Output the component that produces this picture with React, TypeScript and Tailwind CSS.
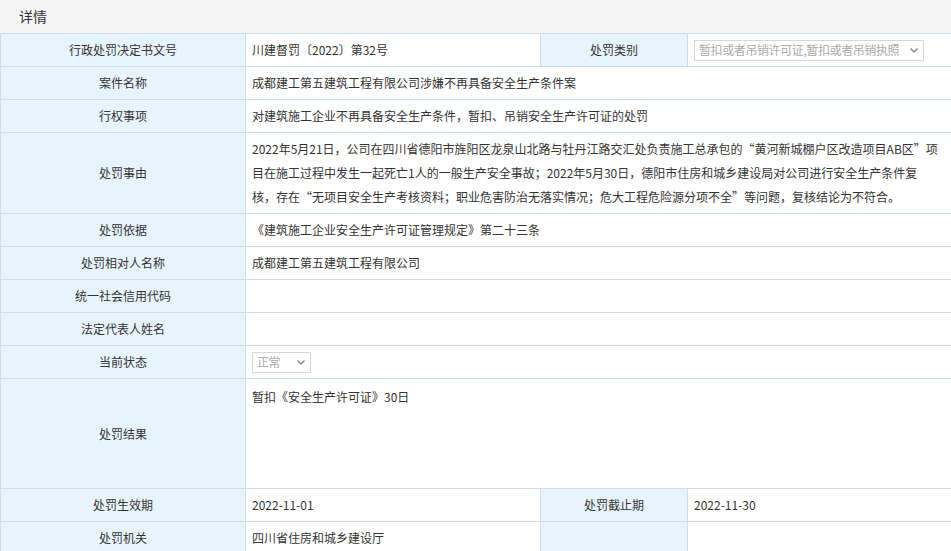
const L = "border border-[#cfdbe6] bg-[#e8f4fd] text-center align-middle";
const V = "border border-[#cfdbe6] bg-white px-[6px] align-middle";

function Sel({ text, w }: { text: string; w: string }) {
  return (
    <div className={`flex h-[21px] items-center justify-between border border-[#d6d6d6] bg-white pl-[4px] pr-[4px] text-[#aaa] ${w}`}>
      <span className="overflow-hidden whitespace-nowrap tracking-[-0.4px]">{text}</span>
      <svg width="10" height="10" viewBox="0 0 10 10" className="ml-1 shrink-0">
        <path d="M1.5 3.5 5 7 8.5 3.5" fill="none" stroke="#888" strokeWidth="1.5" />
      </svg>
    </div>
  );
}

export default function App() {
  return (
    <div className="h-[551px] w-[951px] overflow-hidden bg-white text-[12px] text-[#333]" style={{ fontFamily: '"Noto Sans CJK SC", "Liberation Sans", sans-serif' }}>
      <div className="flex h-[33px] items-center bg-[#f5f5f5] pl-[19px] text-[14px] text-[#333]">详情</div>
      <table className="w-[952px] table-fixed border-collapse">
        <colgroup>
          <col className="w-[245px]" />
          <col className="w-[295px]" />
          <col className="w-[147px]" />
          <col />
        </colgroup>
        <tbody>
          <tr className="h-[33px]">
            <td className={L}>行政处罚决定书文号</td>
            <td className={V}>川建督罚〔2022〕第32号</td>
            <td className={L}>处罚类别</td>
            <td className={V}><Sel text="暂扣或者吊销许可证,暂扣或者吊销执照" w="w-[230px]" /></td>
          </tr>
          <tr className="h-[33px]">
            <td className={L}>案件名称</td>
            <td className={V} colSpan={3}>成都建工第五建筑工程有限公司涉嫌不再具备安全生产条件案</td>
          </tr>
          <tr className="h-[33px]">
            <td className={L}>行权事项</td>
            <td className={V} colSpan={3}>对建筑施工企业不再具备安全生产条件，暂扣、吊销安全生产许可证的处罚</td>
          </tr>
          <tr className="h-[81px]">
            <td className={L}>处罚事由</td>
            <td className={`${V} pr-[12px] leading-[24px]`} colSpan={3}>
              2022年5月21日，公司在四川省德阳市旌阳区龙泉山北路与牡丹江路交汇处负责施工总承包的“黄河新城棚户区改造项目AB区”项目在施工过程中发生一起死亡1人的一般生产安全事故；2022年5月30日，德阳市住房和城乡建设局对公司进行安全生产条件复核，存在“无项目安全生产考核资料；职业危害防治无落实情况；危大工程危险源分项不全”等问题，复核结论为不符合。
            </td>
          </tr>
          <tr className="h-[33px]">
            <td className={L}>处罚依据</td>
            <td className={V} colSpan={3}>《建筑施工企业安全生产许可证管理规定》第二十三条</td>
          </tr>
          <tr className="h-[33px]">
            <td className={L}>处罚相对人名称</td>
            <td className={V} colSpan={3}>成都建工第五建筑工程有限公司</td>
          </tr>
          <tr className="h-[33px]">
            <td className={L}>统一社会信用代码</td>
            <td className={V} colSpan={3}></td>
          </tr>
          <tr className="h-[33px]">
            <td className={L}>法定代表人姓名</td>
            <td className={V} colSpan={3}></td>
          </tr>
          <tr className="h-[33px]">
            <td className={L}>当前状态</td>
            <td className={V} colSpan={3}><Sel text="正常" w="w-[59px]" /></td>
          </tr>
          <tr className="h-[110px]">
            <td className={L}>处罚结果</td>
            <td className={`${V} !align-top pt-[9px]`} colSpan={3}>暂扣《安全生产许可证》30日</td>
          </tr>
          <tr className="h-[33px]">
            <td className={L}>处罚生效期</td>
            <td className={V}>2022-11-01</td>
            <td className={L}>处罚截止期</td>
            <td className={V}>2022-11-30</td>
          </tr>
          <tr className="h-[33px]">
            <td className={L}>处罚机关</td>
            <td className={V}>四川省住房和城乡建设厅</td>
            <td className={L}></td>
            <td className={V}></td>
          </tr>
        </tbody>
      </table>
    </div>
  );
}
